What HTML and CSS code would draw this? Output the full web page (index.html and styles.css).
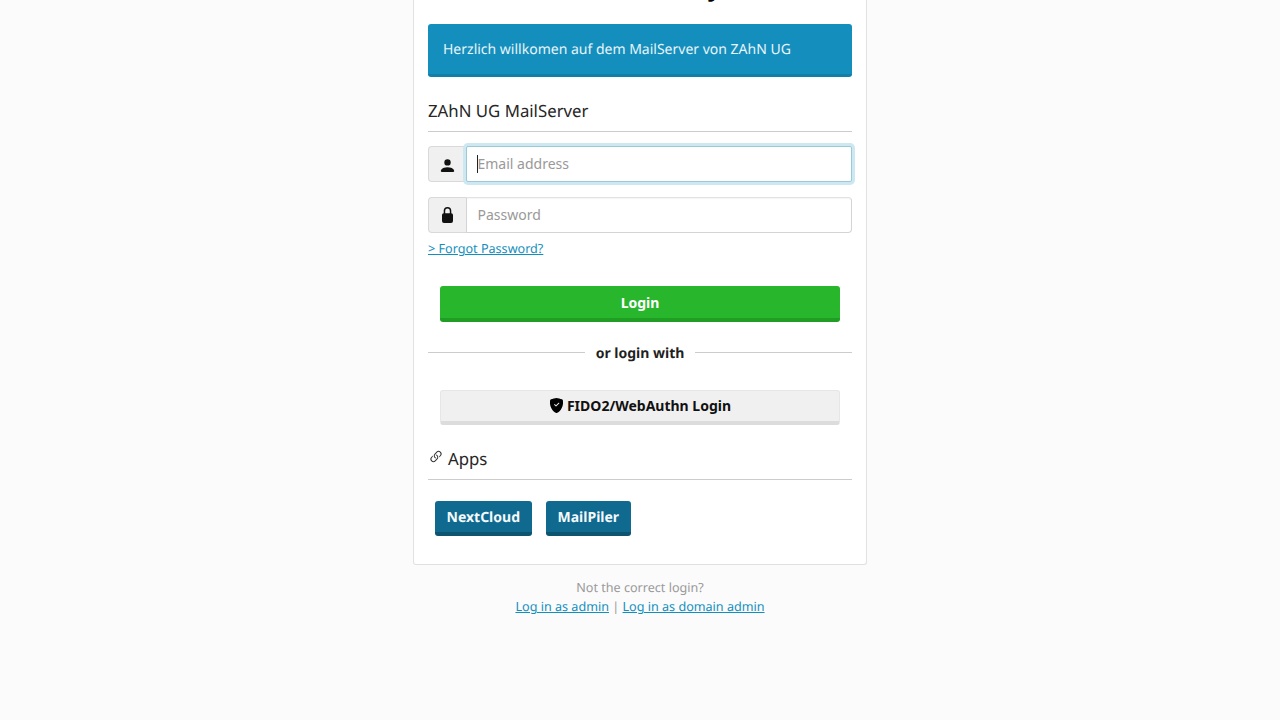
FILE: index.html
```html
<!DOCTYPE html>
<html lang="en">
<head>
  <meta charset="UTF-8" />
  <title>ZAhN UG MailServer</title>
  <link rel="stylesheet" href="styles.css">
</head>
<body>

  <div class="card">
    <h1 class="brand">Mail Gateway</h1>

    <div class="notice">Herzlich willkomen auf dem MailServer von ZAhN UG</div>

    <h2 class="legend">ZAhN UG MailServer</h2>

    <form class="login">
      <div class="field">
        <span class="addon">
          <svg class="icon" viewBox="0 -1 16 16"><path d="M8 8a3 3 0 1 0 0-6 3 3 0 0 0 0 6z"/><path d="M2.500 14s-.8 0-.8-.8.8-3.700 6.300-3.700 6.300 2.900 6.300 3.700-.8.8-.8.8z"/></svg>
        </span>
        <input class="input focused" type="text" placeholder="Email address" />
        <span class="caret"></span>
      </div>
      <div class="field">
        <span class="addon">
          <svg class="icon lock" viewBox="0 0 11 16"><path fill-rule="evenodd" d="M5.500 0A3.800 3.800 0 0 1 9.300 3.800V6.200A2 2 0 0 1 11 8.200V14a2 2 0 0 1-2 2H2a2 2 0 0 1-2-2V8.200A2 2 0 0 1 1.700 6.200V3.800A3.800 3.800 0 0 1 5.500 0zm0 1.500A2.300 2.300 0 0 0 3.200 3.800V6.200h4.600V3.800A2.300 2.300 0 0 0 5.500 1.500z"/></svg>
        </span>
        <input class="input" type="password" placeholder="Password" />
      </div>
      <a class="link forgot" href="#">&gt; Forgot Password?</a>

      <button class="btn btn-login" type="button">Login</button>

      <div class="divider"><span>or login with</span></div>

      <button class="btn btn-fido" type="button">
        <svg class="shield" viewBox="0 0 16 16"><path d="M8 0c-.69 0-1.843.265-2.928.56-1.11.3-2.229.655-2.887.87a1.54 1.54 0 0 0-1.044 1.262c-.596 4.477.787 7.795 2.465 9.99a11.777 11.777 0 0 0 2.517 2.453c.386.273.744.482 1.048.625.28.132.581.24.829.24s.548-.108.829-.24a7.159 7.159 0 0 0 1.048-.625 11.775 11.775 0 0 0 2.517-2.453c1.678-2.195 3.061-5.513 2.465-9.99a1.541 1.541 0 0 0-1.044-1.263 62.467 62.467 0 0 0-2.887-.87C9.843.266 8.69 0 8 0zm2.146 5.146a.5.5 0 0 1 .708.708l-3 3a.5.5 0 0 1-.708 0l-1.500-1.500a.5.5 0 1 1 .708-.708L7.500 7.793l2.646-2.647z"/></svg>
        FIDO2/WebAuthn Login
      </button>
    </form>

    <h2 class="legend apps-title">
      <svg class="chain" viewBox="0 0 16 16"><path d="M4.715 6.542 3.343 7.914a3 3 0 1 0 4.243 4.243l1.828-1.829A3 3 0 0 0 8.586 5.500L8 6.086a1.002 1.002 0 0 0-.154.199 2 2 0 0 1 .861 3.337L6.880 11.450a2 2 0 1 1-2.830-2.830l.793-.792a4.018 4.018 0 0 1-.128-1.287z"/><path d="M6.586 4.672A3 3 0 0 0 7.414 9.500l.775-.776a2 2 0 0 1-.896-3.346L9.120 3.550a2 2 0 1 1 2.830 2.830l-.793.792c.112.420.155.855.128 1.287l1.372-1.372a3 3 0 1 0-4.243-4.243L6.586 4.672z"/></svg>
      Apps
    </h2>
    <div class="apps">
      <a class="btn btn-app" href="#">NextCloud</a>
      <a class="btn btn-app" href="#">MailPiler</a>
    </div>
  </div>

  <div class="footer">
    <div class="muted">Not the correct login?</div>
    <a class="link" href="#">Log in as admin</a>
    <span class="sep">|</span>
    <a class="link" href="#">Log in as domain admin</a>
  </div>

</body>
</html>
```

FILE: styles.css
```css
* { box-sizing: border-box; }

html, body {
  height: 720px;
  overflow: hidden;
}

body {
  margin: 0;
  font-family: "Noto Sans", Arial, sans-serif;
  font-size: 14px;
  line-height: 20px;
  color: #1f1f1f;
  background: #fbfbfb;
  text-rendering: geometricPrecision;
}

.card {
  width: 454px;
  margin: -50px auto 0;
  padding: 0 14px 28px;
  background: #fff;
  border: 1px solid #e1e1e1;
  border-top: none;
  border-radius: 0 0 3px 3px;
}

.brand {
  margin: 0 0 20px;
  height: 54px;
  padding-top: 18px;
  font-size: 24px;
  line-height: 40px;
  font-weight: 700;
  text-align: center;
  color: #000;
}

.notice {
  height: 53px;
  padding: 15px;
  line-height: 21px;
  color: #e8f4fa;
  background: #148fbd;
  border-bottom: 3px solid #117fa8;
  border-radius: 3px;
}

.legend {
  margin: 23px 0 14px;
  padding-bottom: 9px;
  font-size: 16.800px;
  line-height: 22px;
  font-weight: 400;
  color: #262626;
  border-bottom: 1px solid #ccc;
}

.field {
  position: relative;
  display: flex;
  height: 36px;
  margin-bottom: 15px;
}

.addon {
  display: flex;
  align-items: center;
  justify-content: center;
  width: 38px;
  background: #f0f0f0;
  border: 1px solid #d9d9d9;
  border-right: none;
  border-radius: 4px 0 0 4px;
}

.icon {
  width: 17px;
  height: 17px;
  fill: #111;
}

.icon.lock {
  width: 11px;
  height: 16px;
}

.input {
  flex: 1;
  min-width: 0;
  padding: 0 10.500px;
  font: inherit;
  color: #333;
  background: #fff;
  border: 1px solid #d4d4d4;
  border-top-color: #e2e2e2;
  border-radius: 0 4px 4px 0;
  box-shadow: inset 0 1px 1px rgba(0, 0, 0, 0.04);
  outline: none;
}

.input::placeholder { color: #999; }

.input.focused {
  border-color: #9cc9d8;
  border-radius: 2px;
  box-shadow: 0 0 0 3px #cde8f1;
}

.caret {
  position: absolute;
  left: 49px;
  top: 9px;
  width: 1px;
  height: 18px;
  background: #222;
}

.link {
  font-size: 12.600px;
  color: #148fbd;
  text-decoration: underline;
}

.forgot {
  display: block;
  margin-top: -9px;
}

.btn {
  display: block;
  font-family: inherit;
  font-size: 14px;
  font-weight: 700;
  text-align: center;
  border: none;
  border-radius: 3px;
  cursor: pointer;
}

.btn-login {
  width: 400px;
  height: 36px;
  margin: 27px auto 0;
  color: #fff;
  background: #28b62c;
  border-bottom: 4px solid #1f9e23;
}

.divider {
  display: flex;
  align-items: center;
  gap: 11px;
  margin: 22px 0 26px;
  font-weight: 700;
}

.divider::before,
.divider::after {
  content: "";
  flex: 1;
  height: 1px;
  margin-bottom: 4px;
  background: #ccc;
}

.btn-fido {
  display: flex;
  align-items: center;
  justify-content: center;
  gap: 3px;
  width: 400px;
  height: 35px;
  margin: 0 auto;
  padding: 0 0 2px;
  color: #111;
  background: #f0f0f0;
  border: 1px solid #e6e6e6;
  border-bottom: 4px solid #dcdcdc;
}

.shield {
  width: 15px;
  height: 15px;
  fill: #000;
}

.apps-title {
  display: flex;
  align-items: center;
  gap: 4px;
  margin-bottom: 21px;
}

.chain {
  width: 16px;
  height: 16px;
  margin-top: -4px;
  fill: #333;
}

.apps {
  display: flex;
  gap: 14px;
  padding-left: 7px;
}

.btn-app {
  height: 35px;
  padding: 7px 12px 0 11.500px;
  color: #f4f9fb;
  background: #10698f;
  border-bottom: 4px solid #0d5470;
  text-decoration: none;
}

.footer {
  margin-top: 13px;
  font-size: 12.600px;
  line-height: 19px;
  text-align: center;
}

.muted { color: #999; }

.sep { color: #999; }
```
